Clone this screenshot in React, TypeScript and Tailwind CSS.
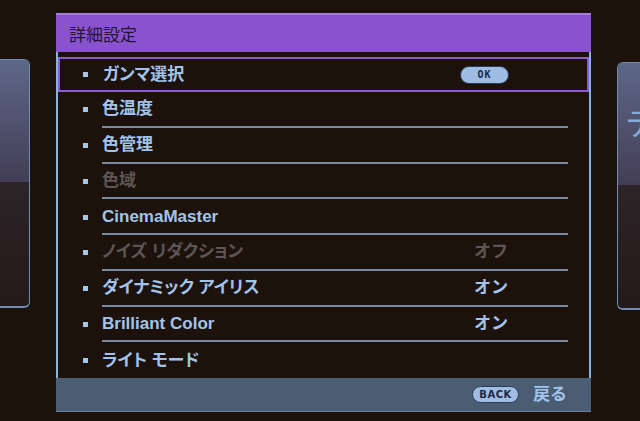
import React from "react";

type Row = { label: string; value?: string; disabled?: boolean };

const rows: Row[] = [
  { label: "色温度" },
  { label: "色管理" },
  { label: "色域", disabled: true },
  { label: "CinemaMaster" },
  { label: "ノイズ リダクション", value: "オフ", disabled: true },
  { label: "ダイナミック アイリス", value: "オン" },
  { label: "Brilliant Color", value: "オン" },
  { label: "ライト モード" },
];

const font = "[font-family:'Liberation_Sans','Noto_Sans_CJK_JP',sans-serif]";

function Bullet() {
  return <div className="w-[5px] h-[5px] bg-[#a6c6ea] shrink-0" />;
}

export default function App() {
  return (
    <div
      className={`w-[640px] h-[421px] bg-[#1d120b] overflow-hidden flex items-start ${font}`}
    >
      {/* left side window */}
      <div className="mt-[59px] w-[30px] h-[249px] shrink-0 flex flex-col rounded-r-[6px] border-r border-b-2 border-t border-[#6f8db5] overflow-hidden">
        <div className="h-[122px] bg-gradient-to-b from-[#5e6789] to-[#433e55]" />
        <div className="flex-1 bg-gradient-to-b from-[#2d2428] to-[#241a1a]" />
      </div>

      {/* main panel */}
      <div className="ml-[26px] mt-[13px] w-[535px] shrink-0 flex flex-col">
        <div className="h-[39px] bg-[#8953cf] border-t-2 border-[#a27ee0] flex items-center pl-[13px]">
          <span className="text-[17px] text-[#26142f] font-normal [font-family:'Noto_Sans_CJK_JP',sans-serif] leading-none">
            詳細設定
          </span>
        </div>
        <div className="border-x-2 border-[#8cb2dc] pt-[5px]">
          {/* selected row */}
          <div className="h-[35px] border-2 border-[#8a5bd2] flex items-center pl-[23px] pr-[78px]">
            <Bullet />
            <span className="ml-[15px] flex-1 text-[17px] font-bold text-[#a2c4ec] leading-none [font-feature-settings:'palt']">
              ガンマ選択
            </span>
            <div className="w-[49px] h-[18px] rounded-full bg-[#9fbde3] border border-[#2a3b5c] flex items-center justify-center">
              <span className="text-[10px] font-bold text-[#1c2848] tracking-[1px] [font-family:'DejaVu_Sans_Mono',monospace] leading-none">
                OK
              </span>
            </div>
          </div>
          {rows.map((r, i) => (
            <div key={i} className="h-[35.75px] flex items-center pl-[25px]">
              <Bullet />
              <div
                className={`ml-[14px] mr-[21px] h-full flex-1 flex items-center ${
                  i < rows.length - 1 ? "border-b-2 border-[#7a8aa2]" : ""
                }`}
              >
                <span
                  className={`flex-1 text-[17px] font-bold leading-none [font-feature-settings:'palt'] ${
                    r.disabled ? "text-[#5d5655]" : "text-[#a2c4ec]"
                  }`}
                >
                  {r.label}
                </span>
                <span
                  className={`w-[94px] text-[17px] font-bold leading-none ${
                    r.disabled ? "text-[#5d5655]" : "text-[#a2c4ec]"
                  }`}
                >
                  {r.value ?? ""}
                </span>
              </div>
            </div>
          ))}
        </div>
        <div className="h-[34px] bg-[#4a5d73] border-b border-[#6b7f98] flex items-center justify-end pr-[24px] gap-[14px]">
          <div className="w-[47px] h-[17px] rounded-full bg-[#9fbde3] border border-[#2a3b5c] flex items-center justify-center">
            <span className="text-[10px] font-bold text-[#1c2848] tracking-[0.5px] leading-none [font-family:'DejaVu_Sans',sans-serif]">
              BACK
            </span>
          </div>
          <span className="text-[17px] font-bold text-[#a2c4ec] leading-none">
            戻る
          </span>
        </div>
      </div>

      {/* right side window */}
      <div className="ml-[26px] mt-[62px] w-[30px] h-[248px] shrink-0 flex flex-col rounded-l-[6px] border-l border-b-2 border-t border-[#6f8db5] overflow-hidden">
        <div className="h-[122px] bg-gradient-to-b from-[#5e6789] to-[#433e55] pl-[7px] pt-[42px]">
          <span className="text-[32px] text-[#86abd8] font-normal leading-none [font-family:'Noto_Sans_CJK_JP',sans-serif] whitespace-nowrap">
            テ
          </span>
        </div>
        <div className="flex-1 bg-gradient-to-b from-[#2d2428] to-[#241a1a]" />
      </div>
    </div>
  );
}
